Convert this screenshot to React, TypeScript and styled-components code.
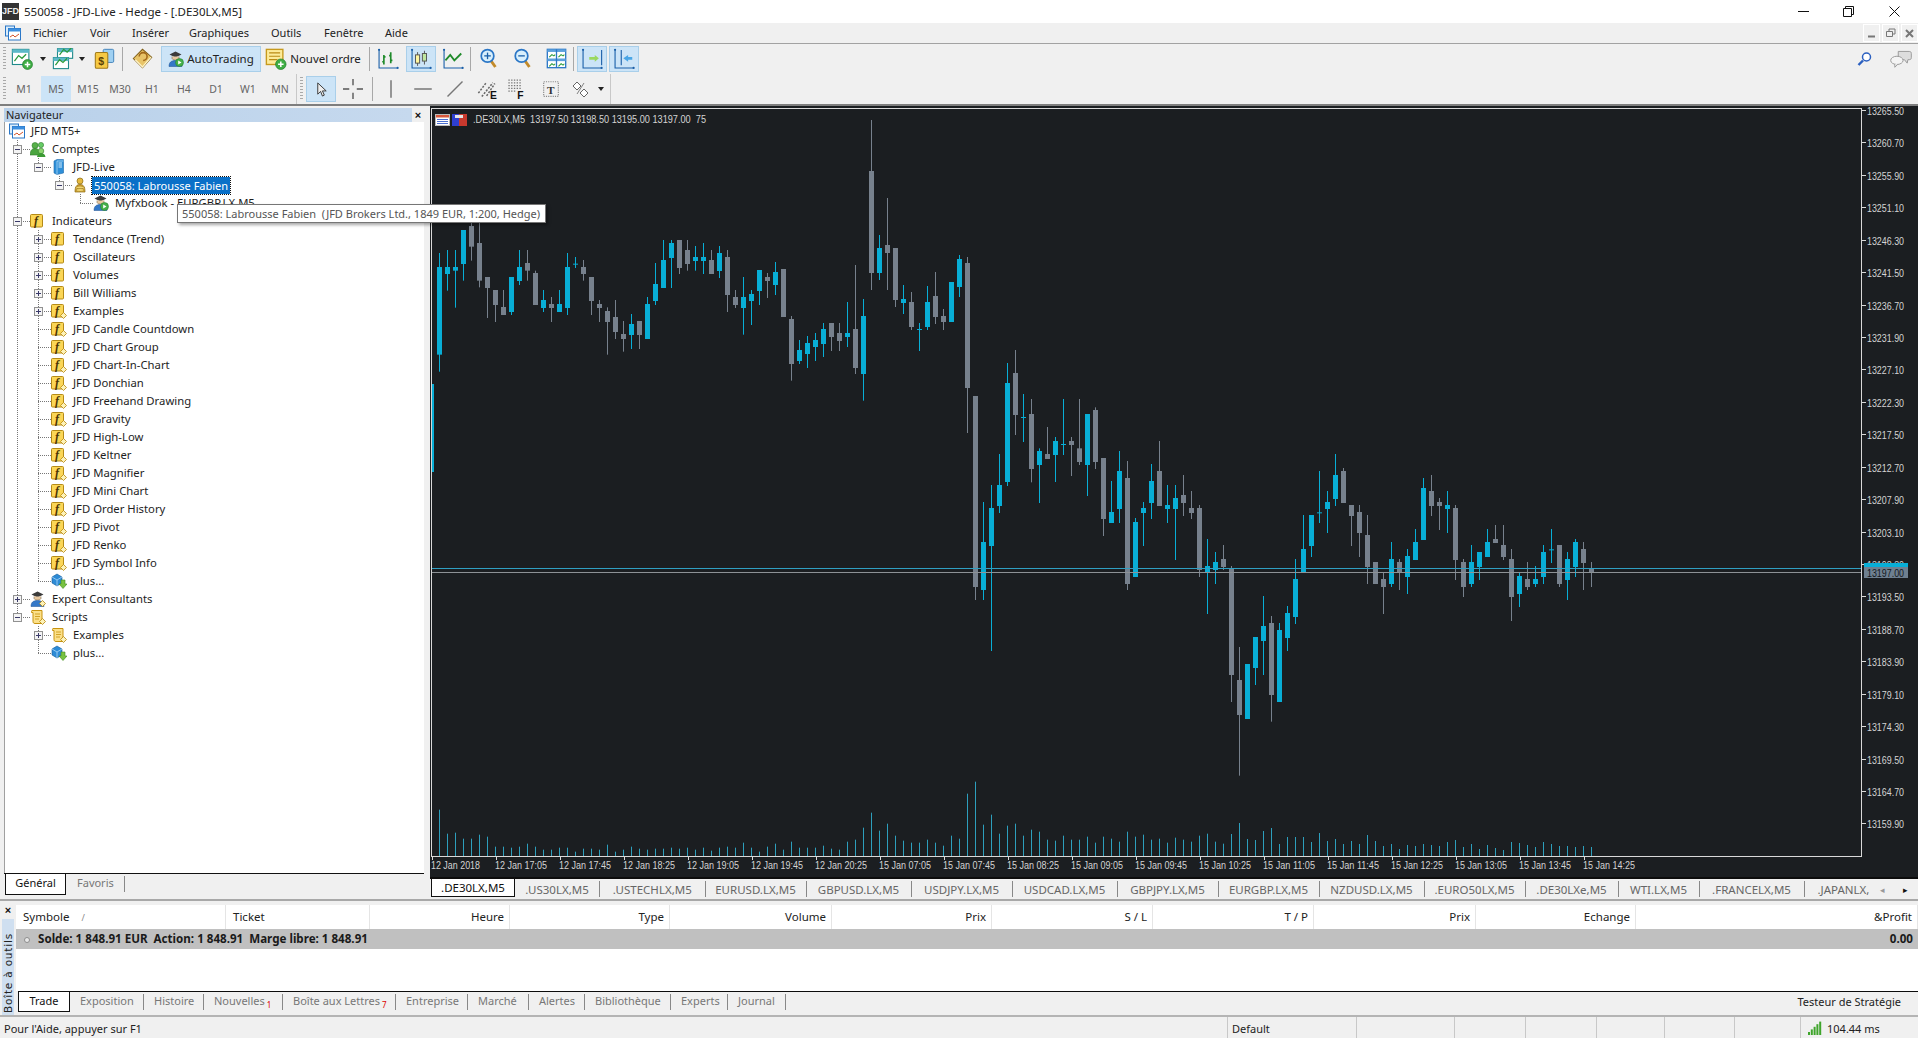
import React from "react";
import styled, { createGlobalStyle } from "styled-components";

const FONT = `"Noto Sans", "Open Sans", "Liberation Sans", sans-serif`;

const Global = createGlobalStyle`
  html, body { margin: 0; padding: 0; background: #f0f0f0; overflow: hidden; }
  * { box-sizing: border-box; }
`;

const Page = styled.div`
  width: 1918px; height: 1038px; overflow: hidden; position: relative;
  display: flex; flex-direction: column;
  font: 11px/1 ${FONT}; color: #1e1e1e; background: #f0f0f0;
`;

/* ---------- title and menu ---------- */
const TitleBar = styled.div`
  height: 23px; background: #fff; display: flex; align-items: center; padding-left: 2px; font-size: 11.5px;
`;
const Logo = styled.div`
  width: 17px; height: 17px; background: #333; color: #eee; font: bold 9px/17px "Liberation Sans", sans-serif; text-align: center; margin-right: 5px;
`;
const TitleText = styled.span`flex: 1; color: #222;`;
const WinBtn = styled.div`
  width: 45px; height: 23px; display: flex; align-items: center; justify-content: center;
  &:last-child { width: 47px; }
`;
const MenuBar = styled.div`
  height: 21px; background: #f0f0f0; border-bottom: 1px solid #a2a2a2; display: flex; align-items: center; padding-left: 5px;
`;
const MenuItem = styled.span<{ $w: number }>`
  width: ${p => p.$w}px; flex: none; font-size: 11px; color: #222;
`;
const MdiGroup = styled.div`margin-left: auto; display: flex; gap: 2px; align-self: flex-start; padding-top: 1px;`;
const MdiBtn = styled.div`
  width: 17px; height: 18px; border: 1px solid #fff; display: flex; align-items: center; justify-content: center;
`;

/* ---------- toolbars ---------- */
const Toolbar = styled.div<{ $h: number }>`
  height: ${p => p.$h}px; display: flex; align-items: center; background: #f0f0f0;
`;
const Grip = styled.div`
  width: 3px; height: 24px; margin: 0 3px 0 3px; flex: none;
  background: repeating-linear-gradient(to bottom, #a9a9a9 0 1px, transparent 1px 3px);
`;
const Slot = styled.div<{ $w: number; $on?: boolean; $l?: number }>`
  width: ${p => p.$w}px; height: 26px; flex: none; display: flex; align-items: center; justify-content: center;
  margin-left: ${p => p.$l ?? 0}px;
  background: ${p => (p.$on ? "#cce4f7" : "transparent")};
  border: 1px solid ${p => (p.$on ? "#a9cfea" : "transparent")};
  font-size: 11.5px; color: #222; gap: 3px; white-space: nowrap;
`;
const Sep = styled.div<{ $l?: number; $r?: number }>`
  width: 1px; height: 24px; background: #a8a8a8; flex: none;
  margin: 0 ${p => p.$r ?? 0}px 0 ${p => p.$l ?? 0}px;
`;
const Caret = styled.div<{ $w: number }>`
  width: ${p => p.$w}px; flex: none; display: flex; justify-content: center;
  &::before { content: ""; border: 3px solid transparent; border-top: 4px solid #222; margin-top: 3px; }
`;
const TfGroup = styled.div`
  display: flex; gap: 2px; padding-right: 1px; height: 30px; align-items: center;
`;
const Tf = styled.div<{ $on?: boolean }>`
  width: 30px; height: 26px; display: flex; align-items: center; justify-content: center;
  font-size: 10.5px; color: #666;
  background: ${p => (p.$on ? "#cce4f7" : "transparent")};
`;
const BandEnd = styled.div`
  width: 1px; height: 30px; background: #c8c8c8; flex: none;
`;
const RightIcons = styled.div`
  margin-left: auto; display: flex; align-items: center; gap: 17px; padding-right: 6px;
`;
const Rule = styled.div`height: 2px; background: #7e7e7e; flex: none;`;

/* ---------- middle ---------- */
const Main = styled.div`height: 793px; display: flex; flex: none;`;
const Navigator = styled.div`
  width: 430px; flex: none; display: flex; flex-direction: column; padding: 2px 6px 0 4px; background: #f0f0f0;
`;
const NavHead = styled.div`height: 14px; display: flex; align-items: center; flex: none;`;
const NavTitle = styled.div`
  width: 408px; height: 14px; padding: 0 0 0 2px; font-size: 11px; line-height: 13px; color: #222;
  background: linear-gradient(to right, #b9d1ea, #c6d9ee);
`;
const NavClose = styled.div`flex: 1; text-align: center; font: bold 11px/14px "Liberation Sans", sans-serif; color: #111;`;
const Tree = styled.div`flex: 1; background: #fff; padding: 0 0 0 4px; border-left: 1px solid #a0a0a0;`;
const Row = styled.div`height: 18px; display: flex; align-items: center; white-space: nowrap; font-size: 11.3px;`;
const dots = "repeating-linear-gradient(to bottom,#777 0 1px,transparent 1px 2px)";
const dotsH = "repeating-linear-gradient(to right,#777 0 1px,transparent 1px 2px)";
const Cell = styled.div<{ $line?: "full" | "half" | "none"; $elbow?: boolean }>`
  width: 21px; height: 18px; flex: none; display: flex; align-items: center; padding-left: 4px;
  background-repeat: no-repeat;
  background-image: ${p => [
    p.$line && p.$line !== "none" ? dots : "none",
    p.$elbow ? dotsH : "none",
  ].join(",")};
  background-position: 8px 0, 8px 9px;
  background-size: 1px ${p => (p.$line === "half" ? "9px" : "18px")}, 13px 1px;
`;
const Expander = styled.div<{ $plus?: boolean }>`
  width: 9px; height: 9px; border: 1px solid #919191; background-color: #f4f4f4; background-repeat: no-repeat; background-position: center;
  background-image: linear-gradient(#3a3a6a, #3a3a6a)${p => (p.$plus ? ", linear-gradient(#3a3a6a, #3a3a6a)" : "")};
  background-size: 5px 1px${p => (p.$plus ? ", 1px 5px" : "")};
`;
const RowIcon = styled.div`width: 16px; height: 16px; flex: none; margin-right: 6px;`;
const RowLabel = styled.span<{ $sel?: boolean }>`
  padding: 3px 2px; margin-left: -2px;
  font-size: ${p => (p.$sel ? "11px" : "inherit")};
  background: ${p => (p.$sel ? "#0a70c8" : "transparent")};
  color: ${p => (p.$sel ? "#fff" : "#1e1e1e")};
  outline: ${p => (p.$sel ? "1px dotted #111" : "none")};
`;
const Tip = styled.div`
  position: absolute; left: 177px; top: 204px; width: 369px; height: 19px; background: #fff;
  border: 1px solid #767676; box-shadow: 2px 2px 3px rgba(0,0,0,.35); padding: 3px 0 0 4px;
  font-size: 11px; color: #555; white-space: pre; z-index: 5;
`;
const NavTabs = styled.div`
  height: 25px; flex: none; border-top: 1px solid #111; display: flex; align-items: flex-start; padding-left: 1px; margin-bottom: 1px;
`;
const NavTabOn = styled.div`
  width: 61px; height: 21px; background: #fff; border: 1px solid #111; border-top: 0; text-align: center; line-height: 18px; color: #111;
`;
const NavTabOff = styled.div`
  width: 59px; height: 16px; margin-top: 2px; padding-left: 11px; line-height: 14px; color: #777; border-right: 1px solid #888;
`;
const ChartCol = styled.div`flex: 1; display: flex; flex-direction: column; min-width: 0;`;
const ChartSvg = styled.svg`display: block; flex: none; width: 1488px; height: 771px; background: #1b1e21;`;
const ChartTabs = styled.div`
  height: 22px; flex: none; display: flex; align-items: center; background: #f0f0f0; border-top: 2px solid #0c0c0c; padding-left: 1px; font-size: 11.5px;
`;
const ChartTab = styled.div<{ $w: number; $on?: boolean }>`
  width: ${p => p.$w}px; flex: none; overflow: hidden; white-space: nowrap; text-align: center;
  height: ${p => (p.$on ? 18 : 16)}px; line-height: ${p => (p.$on ? 18 : 17)}px;
  align-self: ${p => (p.$on ? "flex-start" : "center")};
  color: ${p => (p.$on ? "#111" : "#666")};
  background: ${p => (p.$on ? "#fff" : "transparent")};
  border: ${p => (p.$on ? "1px solid #111" : "0")};
  border-top: 0;
  border-right: 1px solid ${p => (p.$on ? "#111" : "#888")};
`;
const ClipTab = styled(ChartTab)`border-right: 0; text-align: left; padding-left: 13px;`;
const TabArrows = styled.div`
  margin-left: auto; width: 43px; display: flex; justify-content: space-between; padding: 0 10px 0 5px; font-size: 9px; color: #111;
`;
const ArrowDim = styled.span`color: #999;`;

/* ---------- bottom ---------- */
const Bottom = styled.div`
  height: 116px; flex: none; display: flex; border-top: 2px solid #a8a8a8; padding-top: 4px; background: #f0f0f0;
`;
const Strip = styled.div`width: 16px; flex: none; display: flex; flex-direction: column; align-items: center;`;
const StripX = styled.div`height: 14px; font: bold 11px/10px "Liberation Sans", sans-serif; color: #111;`;
const StripText = styled.div`
  flex: 1; width: 12px; background: #cfdff0; writing-mode: vertical-rl; transform: rotate(180deg);
  font: 10.5px/12px "DejaVu Sans", sans-serif; color: #222; letter-spacing: .8px; text-align: left; padding-top: 2px;
`;
const Terminal = styled.div`flex: 1; display: flex; flex-direction: column; min-width: 0;`;
const COLS = "210px 144px 140px 160px 162px 160px 161px 161px 162px 160px 282px";
const Head = styled.div`height: 24px; flex: none; background: #fff; display: grid; grid-template-columns: ${COLS}; font-size: 11.5px;`;
const HeadCell = styled.div<{ $right?: boolean }>`
  border-right: 1px solid #e5e5e5; display: flex; align-items: center; padding: 0 5px 0 7px;
  justify-content: ${p => (p.$right ? "flex-end" : "flex-start")}; color: #222; gap: 12px;
`;
const SortMark = styled.span`color: #888; font-size: 9px;`;
const Balance = styled.div`
  height: 20px; flex: none; background: #c0c0c0; display: flex; align-items: center; padding: 0 5px 0 8px; font-weight: 700; font-size: 11.6px; color: #1a1a1a; white-space: pre;
`;
const Dot = styled.span`width: 6px; height: 6px; border-radius: 50%; background: #e8e8e8; border: 1px solid #8d8d8d; margin-right: 8px; margin-top: 1px;`;
const BalanceEnd = styled.span`margin-left: auto;`;
const Blank = styled.div`height: 42px; flex: none; background: #fff;`;
const TermTabs = styled.div`
  height: 24px; flex: none; border-top: 1px solid #0c0c0c; display: flex; align-items: flex-start; margin-left: 2px; background: #f0f0f0;
`;
const TermOn = styled.div`
  width: 52px; height: 20px; background: #fff; border: 1px solid #111; border-top: 0; text-align: center; line-height: 17px; color: #111; flex: none;
`;
const TermOff = styled.div<{ $w: number }>`
  width: ${p => p.$w}px; height: 16px; margin-top: 2px; padding-left: 10px; line-height: 13px; flex: none; color: #777; border-right: 1px solid #888; white-space: nowrap;
`;
const Badge = styled.sub`color: #d00; font-size: 8px; margin-left: 2px; vertical-align: -3px; line-height: 0;`;
const Tester = styled.div`margin-left: auto; padding: 4px 17px 0 0; color: #222;`;
const StatusRule = styled.div`height: 2px; background: #b4b4b4; flex: none;`;
const Status = styled.div`height: 21px; flex: none; display: flex; align-items: center; background: #f0f0f0;`;
const StatusCell = styled.div<{ $w: number; $last?: boolean }>`
  width: ${p => p.$w}px; height: 21px; flex: none; padding: 2px 0 0 ${p => (p.$last ? 6 : 4)}px; display: flex; align-items: center; gap: 4px;
  border-right: ${p => (p.$last ? "0" : "1px solid #c8c8c8")}; color: #222; font-size: 11px; white-space: nowrap;
`;

/* ---------- icons ---------- */
const Ico: React.FC<{ s?: number; children: React.ReactNode }> = ({ s = 16, children }) => (
  <svg width={s} height={s} viewBox="0 0 16 16" style={{ display: "block", flex: "none" }}>{children}</svg>
);
const Plus = ({ cx = 12, cy = 12, r = 3.6 }) => (
  <g>
    <circle cx={cx} cy={cy} r={r} fill="#3fae45" stroke="#1d7a27" strokeWidth=".5" />
    <path d={`M${cx - 2} ${cy}h4M${cx} ${cy - 2}v4`} stroke="#fff" strokeWidth="1.1" />
  </g>
);
const Diamond = () => <path d="M12.5 9.5l3 3-3 3-3-3z" fill="#fdf2b8" stroke="#b8860b" strokeWidth=".8" />;
const WorkIcon = () => (
  <Ico>
    <rect x=".5" y="1" width="9" height="10" fill="#d9ecfb" stroke="#2a76c6" />
    <rect x="3.5" y="3.5" width="12" height="11.5" fill="#fff" stroke="#2a76c6" />
    <rect x="3.5" y="3.5" width="12" height="3" fill="#3c8fe0" />
    <path d="M5 12l3-2 2 2 4-3" stroke="#d2522a" fill="none" />
  </Ico>
);
const PeopleIcon = () => (
  <Ico>
    <circle cx="5" cy="4.5" r="3" fill="#57b04a" stroke="#2f7a2a" strokeWidth=".6" />
    <circle cx="11" cy="4" r="2.6" fill="#6c6" stroke="#2f7a2a" strokeWidth=".6" />
    <path d="M0 14c.5-5 2-6.5 5-6.5s4.500 1.500 5 6.500z" fill="#4aa53f" stroke="#2f7a2a" strokeWidth=".6" />
    <circle cx="11" cy="10" r="2.800" fill="#8cd46e" stroke="#2f7a2a" strokeWidth=".6" />
    <path d="M7 16c.5-3 2-4 4-4s4 1 4.500 4z" fill="#3c9a34" />
  </Ico>
);
const ServerIcon = () => (
  <Ico>
    <path d="M3 2l3-1.500h6.500V14L6 15.500 3 14z" fill="#2e8fd8" stroke="#1e6aaa" strokeWidth=".6" />
    <path d="M6 2h6.500M6 2v13.500" stroke="#bfe3fb" strokeWidth=".7" />
    <path d="M7.500 4h3.500M7.500 6h3.500M7.500 8h3.500" stroke="#e9f6ff" strokeWidth=".9" />
  </Ico>
);
const CoinIcon = () => (
  <Ico>
    <circle cx="8" cy="4" r="3" fill="#e6b93d" stroke="#8a6a16" strokeWidth=".7" />
    <path d="M3 15c0-6 2-7.500 5-7.500s5 1.500 5 7.500z" fill="#d9a62e" stroke="#8a6a16" strokeWidth=".7" />
    <ellipse cx="8" cy="10.500" rx="4" ry="1.500" fill="#f3d56e" stroke="#8a6a16" strokeWidth=".5" />
    <ellipse cx="8" cy="13" rx="4" ry="1.500" fill="#f3d56e" stroke="#8a6a16" strokeWidth=".5" />
  </Ico>
);
const Robot = ({ play = false, dia = false }) => (
  <Ico>
    <path d="M1.500 3.500L7.500.5l6 3-6 3z" fill="#3b3b3b" />
    <path d="M4 5.500v2c1 2 6 2 7 0v-2" fill="#e8c8a0" stroke="#6a5a40" strokeWidth=".5" />
    <path d="M1 15.500c0-4 2-6 6.500-6s6 2 6.500 6z" fill="#3478c8" stroke="#1b4f8f" strokeWidth=".5" />
    {play && <g><circle cx="11.500" cy="11.500" r="4" fill="#45b04a" stroke="#1f7a2a" strokeWidth=".5" /><path d="M10.200 9.500l3.300 2-3.300 2z" fill="#fff" /></g>}
    {dia && <Diamond />}
  </Ico>
);
const FxIcon = ({ dia = false }) => (
  <Ico>
    <rect x=".5" y="1.500" width="12" height="12.500" rx="1" fill="#fbd657" stroke="#b58a16" />
    <text x="4" y="12" fontFamily='"Liberation Serif", serif' fontStyle="italic" fontWeight="700" fontSize="12" fill="#4a3405">f</text>
    {dia && <Diamond />}
  </Ico>
);
const CubeIcon = () => (
  <Ico>
    <path d="M1 4l5-3 5 3v6l-5 3-5-3z" fill="#2d8bd6" stroke="#165d9a" strokeWidth=".6" />
    <path d="M1 4l5 3 5-3M6 7v6" stroke="#bfe3fb" strokeWidth=".7" fill="none" />
    <path d="M10 7h4v4h2l-4 4.500L8 11h2z" fill="#78c241" stroke="#3f8a1f" strokeWidth=".6" />
  </Ico>
);
const ScrollIcon = () => (
  <Ico>
    <path d="M2 1.500h10v11c0 1.500 1 2 1 2H5c-1.500 0-2-1-2-2V3.500H1.500c0-1 0-2 .5-2z" fill="#fbe08a" stroke="#c8930e" />
    <path d="M5 5h5M5 7.500h5M5 10h4" stroke="#c8930e" strokeWidth=".8" />
    <Diamond />
  </Ico>
);
const WinFrame = ({ x = 1, y = 1, w = 12, h = 11 }) => (
  <g>
    <rect x={x} y={y} width={w} height={h} fill="#fff" stroke="#1f8a8a" strokeWidth=".8" />
    <rect x={x} y={y} width={w} height="2.500" fill="#5cb8c8" />
    <path d={`M${x + 1.500} ${y + h - 2.500}l3-4 2.500 2 3-3`} stroke="#2a9a3a" fill="none" strokeWidth=".9" />
  </g>
);
const NewChart = () => <Ico s={22}><WinFrame /><Plus /></Ico>;
const Profiles = () => <Ico s={22}><WinFrame x={4} y={.5} w={11} h={7} /><WinFrame x={1} y={7} w={11} h={8} /></Ico>;
const Market = () => (
  <Ico s={21}>
    <rect x="7" y="1" width="8" height="10" rx="1" fill="#9fd0f2" stroke="#3e7fb8" strokeWidth=".7" />
    <rect x="1" y="3.500" width="9.500" height="12" rx="1" fill="#f6c944" stroke="#a07a18" strokeWidth=".8" />
    <text x="3.300" y="12.800" fontFamily='"Liberation Sans", sans-serif' fontWeight="700" fontSize="8" fill="#5b4206">$</text>
  </Ico>
);
const Book = () => (
  <Ico s={21}>
    <path d="M1 8l7-7 7 6-7 8z" fill="#e8c468" stroke="#80601a" strokeWidth=".8" />
    <path d="M2.500 9l5.500 5.500L14.500 7" fill="none" stroke="#fff5c8" strokeWidth="1" />
    <path d="M5.500 6.500a3 3 0 1 1 3 3" fill="none" stroke="#a2681a" strokeWidth="1.200" />
  </Ico>
);
const OrderIco = () => (
  <Ico s={22}>
    <rect x="1" y="1" width="12" height="11" fill="#fdeb9a" stroke="#c79a1e" />
    <path d="M3 3.500h8M3 6h8M3 8.500h6" stroke="#b98a14" strokeWidth=".9" />
    <Plus cx={11.500} cy={11.800} r={3.800} />
  </Ico>
);
const Axes = ({ children }: { children?: React.ReactNode }) => (
  <Ico s={22}>
    <path d="M1.500 1v13.500H15" stroke="#1a5fa8" fill="none" strokeWidth=".8" />
    <circle cx="1.500" cy="1.300" r=".8" fill="#1a5fa8" /><circle cx="15" cy="14.500" r=".8" fill="#1a5fa8" />
    {children}
  </Ico>
);
const BarsIco = () => <Axes><path d="M5 5v7M3.800 10h1.200M5 6.500h1.200M10 3v8M8.800 5.500H10M10 9h1.200" stroke="#1f8a2a" strokeWidth="1.200" fill="none" /></Axes>;
const CandleIco = () => <Axes><path d="M5.500 3v10M10.500 2v10" stroke="#555" strokeWidth=".7" /><rect x="4" y="5" width="3" height="6" fill="#fff6a0" stroke="#555" strokeWidth=".7" /><rect x="9" y="4" width="3" height="5.500" fill="#bfe7a0" stroke="#555" strokeWidth=".7" /></Axes>;
const LineIco = () => <Axes><path d="M2.500 9l3.500-4 3 4 5-5" stroke="#1f8a2a" strokeWidth="1.300" fill="none" /></Axes>;
const Magnify = ({ plus = false }) => (
  <Ico s={21}>
    <path d="M9 9.500l3.500 5" stroke="#c28a2a" strokeWidth="2.200" />
    <circle cx="6.500" cy="6" r="4.800" fill="#d8effc" stroke="#2a76c6" strokeWidth="1.300" />
    <path d="M4 6h5" stroke="#1a5fa8" />
    {plus && <path d="M6.500 3.500v5" stroke="#1a5fa8" />}
  </Ico>
);
const Tile = () => (
  <Ico s={21}>
    <rect x="1" y="1" width="14" height="14" fill="#fff" stroke="#2a76c6" />
    <rect x="1" y="1" width="14" height="2" fill="#5aa0dc" />
    <rect x="1" y="8" width="14" height="2" fill="#5aa0dc" />
    <path d="M8 1v14" stroke="#2a76c6" />
    <path d="M2.500 7l2-2 1.500 1 1-1M9.500 7l2-2 1.500 1 1-1M2.500 14l2-2 1.500 1 1-1M9.500 14l2-2 1.500 1 1-1" stroke="#2a9a3a" fill="none" strokeWidth=".8" />
  </Ico>
);
const ShiftIco = () => <Axes><path d="M15 1.500v11" stroke="#1a5fa8" strokeWidth=".8" /><path d="M6 6.500h4V5l3 2.500-3 2.500V8.500H6z" fill="#9ad860" /></Axes>;
const ScrollIco = () => <Axes><path d="M6 1.500v11" stroke="#1a5fa8" strokeWidth=".8" /><path d="M14 6.500h-3V5L7.500 7.500 11 10V8.500h3z" fill="#4aa6e6" /></Axes>;
const CursorIco = () => <Ico s={15}><path d="M4 1v12l3-3 2 5 2-1-2-4.500h4z" fill="#eee" stroke="#333" strokeWidth="1" /></Ico>;
const CrossIco = () => <Ico s={20}><path d="M8 0v5M8 11v5M0 8h5M11 8h5" stroke="#555" strokeWidth="1.100" /></Ico>;
const VertIco = () => <Ico s={20}><path d="M8 1v14" stroke="#777" strokeWidth="1.200" /></Ico>;
const HorizIco = () => <Ico s={20}><path d="M1 8h14" stroke="#777" strokeWidth="1.200" /></Ico>;
const TrendIco = () => <Ico s={20}><path d="M2 14L14 2" stroke="#777" strokeWidth="1.200" /></Ico>;
const ChannelIco = () => (
  <Ico s={22}>
    <path d="M1 11l6-8M3.500 13.500l8-10M7 13l6-9" stroke="#666" strokeWidth="1.100" strokeDasharray="1.500 1" fill="none" />
    <text x="9.500" y="15.500" fontFamily='"Liberation Sans", sans-serif' fontWeight="700" fontSize="7.500" fill="#111">E</text>
  </Ico>
);
const FiboIco = () => (
  <Ico s={22}>
    <path d="M1 1.500h10M1 3.500h10M1 5.500h10M1 7.500h10M1 9.500h6" stroke="#777" strokeDasharray="1 1" />
    <text x="7.500" y="15.500" fontFamily='"Liberation Sans", sans-serif' fontWeight="700" fontSize="7.500" fill="#111">F</text>
  </Ico>
);
const TextIco = () => (
  <Ico s={18}>
    <rect x="1.500" y="1.500" width="13" height="13" fill="none" stroke="#888" strokeDasharray="1 1" />
    <text x="4.500" y="12" fontFamily='"Liberation Serif", serif' fontWeight="700" fontSize="10" fill="#333">T</text>
  </Ico>
);
const ShapesIco = () => (
  <Ico s={16}>
    <path d="M4 1l4 4-4 4-4-4z" fill="#fff" stroke="#666" /><path d="M11 8l4 4-4 4-4-4z" fill="#fff" stroke="#666" />
    <path d="M11 2L4 13" stroke="#666" strokeWidth=".8" />
  </Ico>
);
const SearchBlue = () => <Ico s={16}><path d="M6 9.500L1.500 14" stroke="#2a5fc0" strokeWidth="2.400" /><circle cx="9.500" cy="6" r="4" fill="#fff" stroke="#2a5fc0" strokeWidth="1.500" /></Ico>;
const ChatIco = () => (
  <Ico s={22}>
    <path d="M6 2.500h8c1 0 1.500 .5 1.500 1.500v3c0 1-.5 1.500-1.500 1.500h-1L12.500 11 10.500 8.500H6z" fill="#ddd" stroke="#999" strokeWidth=".7" />
    <ellipse cx="5" cy="9" rx="4.500" ry="3" fill="#f4f4f4" stroke="#999" strokeWidth=".7" />
    <path d="M3.500 11.500v2.500l2-2" fill="#f4f4f4" stroke="#999" strokeWidth=".7" />
  </Ico>
);
const Signal = () => (
  <Ico s={16}>
    {[0, 1, 2, 3, 4].map(i => <rect key={i} x={1 + i * 2.800} y={13 - i * 2.600 - 2} width="2" height={i * 2.600 + 3} fill="#3fa52c" />)}
  </Ico>
);

/* ---------- tree data ---------- */
type L = "full" | "half" | "none";
type TreeRow = { t: string; cells: L[]; elbow?: boolean; exp?: "+" | "-"; icon: React.ReactNode; sel?: boolean };
const ind = (t: string, icon: React.ReactNode, exp?: "+" | "-"): TreeRow => ({ t, cells: ["full", "full"], icon, exp, elbow: true });
const jfd = ["JFD Candle Countdown", "JFD Chart Group", "JFD Chart-In-Chart", "JFD Donchian", "JFD Freehand Drawing", "JFD Gravity", "JFD High-Low", "JFD Keltner", "JFD Magnifier", "JFD Mini Chart", "JFD Order History", "JFD Pivot", "JFD Renko", "JFD Symbol Info"];
const rows: TreeRow[] = [
  { t: "JFD MT5+", cells: [], icon: <WorkIcon /> },
  { t: "Comptes", cells: ["full"], elbow: true, exp: "-", icon: <PeopleIcon /> },
  { t: "JFD-Live", cells: ["full", "half"], elbow: true, exp: "-", icon: <ServerIcon /> },
  { t: "550058: Labrousse Fabien", cells: ["full", "none", "half"], elbow: true, exp: "-", icon: <CoinIcon />, sel: true },
  { t: "Myfxbook - EURGBP.LX,M5", cells: ["full", "none", "none", "half"], elbow: true, icon: <Robot play /> },
  { t: "Indicateurs", cells: ["full"], elbow: true, exp: "-", icon: <FxIcon /> },
  ind("Tendance (Trend)", <FxIcon />, "+"),
  ind("Oscillateurs", <FxIcon />, "+"),
  ind("Volumes", <FxIcon />, "+"),
  ind("Bill Williams", <FxIcon />, "+"),
  ind("Examples", <FxIcon dia />, "+"),
  ...jfd.map(n => ind(n, <FxIcon dia />)),
  { t: "plus...", cells: ["full", "half"], elbow: true, icon: <CubeIcon /> },
  { t: "Expert Consultants", cells: ["full"], elbow: true, exp: "+", icon: <Robot dia /> },
  { t: "Scripts", cells: ["half"], elbow: true, exp: "-", icon: <ScrollIcon /> },
  { t: "Examples", cells: ["none", "full"], elbow: true, exp: "+", icon: <ScrollIcon /> },
  { t: "plus...", cells: ["none", "half"], elbow: true, icon: <CubeIcon /> },
];

/* ---------- chart data: [zoom x, cyan?, wick top, body top, body bottom, wick bottom] in zoom units ---------- */
type C = [number, number, number, number, number, number];
const partA: C[] = [
  [24,1,447,489,752,803],[45,1,438,489,510,560],[66,1,438,489,500,611],[87,1,378,378,480,530],[108,0,355,366,428,470],[129,0,355,417,530,550],[150,0,519,519,552,642],[171,0,558,558,603,654],[192,0,558,609,633,633],[213,1,519,519,624,633],[234,1,438,489,531,543],[255,0,438,477,500,530],[276,0,500,507,603,603],[296,1,558,588,612,624],[317,0,579,600,612,654],[338,1,558,600,624,624],[359,1,447,489,612,633],[380,1,459,479,481,492],[401,0,468,489,510,530],[422,0,519,519,591,633],[443,0,588,600,612,654],[464,0,610,621,654,752],[485,0,588,639,684,705],[505,0,651,690,705,743],[526,1,630,660,693,735],[547,0,651,651,693,735],[568,1,579,600,705,705],[589,1,477,540,591,603],[610,1,408,468,552,552],[631,1,408,417,462,552],[652,0,408,408,492,510],[673,0,408,438,480,500],[693,1,426,459,471,500],[714,1,417,459,471,510],[735,0,438,468,510,510],[756,1,426,447,501,522],[777,0,438,459,573,624],[798,0,558,579,603,612],[819,1,519,579,612,692],[840,1,558,570,591,663],[861,1,498,498,561,603],[882,0,507,519,531,582],[903,1,474,504,543,573],[924,0,495,495,639,639],[945,0,636,645,780,830],[965,1,708,738,771,780],[986,1,696,717,750,792],[1007,1,687,708,729,771],[1028,1,657,675,720,759],[1049,0,657,657,699,741],[1070,0,657,687,711,741],[1091,1,594,687,699,729],[1112,0,483,675,792,810],[1133,1,585,636,810,890],[1154,0,48,201,507,558],[1174,1,393,432,507,528],[1195,0,282,423,447,558],[1216,0,432,432,588,609],[1237,1,543,585,597,630],[1258,0,564,594,669,678],[1279,1,657,675,677,741],[1300,1,546,594,669,678],[1321,0,504,576,639,660],[1342,0,615,636,654,678],[1362,1,534,534,654,654],[1383,1,453,465,549,579],[1404,0,459,477,852,987],[1425,0,876,876,1449,1488],[1446,1,1194,1314,1458,1488],[1467,1,1143,1212,1326,1641],[1488,1,1050,1143,1206,1227],[1509,1,777,837,1134,1146],[1530,0,738,807,933,993],[1551,1,870,939,941,1014],
];
const partB: C[] = [
  [3,0,0,45,210,250],[24,1,148,156,198,312],[45,0,84,165,180,180],[66,1,114,126,168,249],[87,1,0,135,137,168],[108,0,114,126,138,231],[129,0,0,148,189,198],[150,1,45,45,198,291],[171,0,25,33,189,210],[192,0,177,177,360,411],[213,1,246,339,372,372],[234,1,156,216,330,372],[255,0,186,237,555,573],[276,1,357,369,534,534],[296,1,309,327,342,441],[317,1,195,246,312,360],[338,0,126,216,321,321],[359,1,258,318,330,372],[380,1,258,297,330,483],[401,0,228,288,312,351],[422,0,276,327,342,360],[443,0,318,327,513,534],[464,1,420,501,521,645],[485,1,459,489,513,555],[505,0,438,480,504,513],[526,0,501,507,828,909],[547,0,744,843,948,1130],[568,1,795,795,960,960],[589,1,714,714,807,858],[610,1,591,681,726,828],[631,0,651,672,888,968],[652,1,672,693,909,909],[673,1,621,642,717,756],[693,1,480,540,654,675],[714,1,348,450,522,522],[735,1,348,348,441,474],[756,1,216,340,342,372],[777,1,276,309,330,402],[798,1,165,228,300,321],[819,0,207,216,312,312],[840,0,318,318,351,441],[861,0,318,339,402,474],[882,0,348,408,504,555],[903,0,489,489,555,555],[924,0,522,540,564,645],[945,1,429,480,555,564],[965,0,480,489,522,573],[986,1,450,471,534,585],[1007,1,390,429,483,483],[1028,1,237,267,423,423],[1049,0,228,276,321,351],[1070,0,297,309,321,393],[1091,1,276,318,330,402],[1112,0,318,327,483,543],[1133,0,480,489,564,594],[1153,1,438,489,555,564],[1174,1,459,459,504,543],[1195,1,390,429,474,474],[1216,0,378,420,432,432],[1237,0,378,438,474,483],[1258,0,450,480,594,666],[1279,1,522,531,585,624],[1300,0,489,540,564,573],[1321,1,501,540,555,564],[1342,1,438,459,534,555],[1362,1,390,451,453,492],[1383,0,438,438,555,564],[1404,1,459,480,543,603],[1425,1,420,429,504,534],[1446,0,429,450,492,573],[1467,0,489,510,520,564],
];
const snap = (x: number) => 439 + 8 * Math.round((x - 439) / 8);
const candles = [
  ...partA.map(c => ({ x: snap(430 + c[0] / 2.613), cy: c[1], v: c.slice(2).map(z => 105 + z / 3) })),
  ...partB.map(c => ({ x: snap(1030 + c[0] / 2.613), cy: c[1], v: c.slice(2).map(z => 400 + z / 3) })),
];
const volA = [123,195,192,210,210,198,204,234,234,237,234,225,234,243,243,237,237,249,240,240,243,228,249,243,234,240,243,240,240,237,240,237,243,237,246,237,234,237,222,237,249,234,225,243,219,237,237,237,231,240,243,219,213,177,132,186,165,201,216,222,222,213,222,231,201,210,75,39,168,138,195,171,165,201,183,189,213,216,201,213,213,204,222,204,210,219,189,204,198,213,210,222,207,213,219,201,195,219,225];
const volB = [435,402,450,453,426,417,465,444,444,444,459,432,456,450,465,456,465,438,456,471,465,480,468,471,465,468,471,459,453,474,465,480,468,477,483,459,462,468,474,459,465,471,471,474,471,474];
const volumes = [...volA.map(z => (262 - z) / 3), ...volB.map(z => (501 - z) / 3)];
const times = ["12 Jan 2018","12 Jan 17:05","12 Jan 17:45","12 Jan 18:25","12 Jan 19:05","12 Jan 19:45","12 Jan 20:25","15 Jan 07:05","15 Jan 07:45","15 Jan 08:25","15 Jan 09:05","15 Jan 09:45","15 Jan 10:25","15 Jan 11:05","15 Jan 11:45","15 Jan 12:25","15 Jan 13:05","15 Jan 13:45","15 Jan 14:25"];
const CY = "#08aed6", GR = "#77818d", AX = "#d9d9d9", LAB = "#d4d4d4";
const svgFont = '"Liberation Sans", sans-serif';

const Chart = () => (
  <ChartSvg viewBox="430 107 1488 771">
    <rect x="431" y="109" width="1431" height="1" fill={AX} />
    <rect x="431" y="109" width="1" height="749" fill={AX} />
    <rect x="1861" y="109" width="1" height="749" fill={AX} />
    <rect x="431" y="857" width="1431" height="1" fill={AX} />
    <rect x="432" y="385" width="2" height="88" fill={CY} />
    {candles.map((c, i) => (
      <g key={i} fill={c.cy ? CY : GR}>
        <rect x={c.x} y={c.v[0]} width="1" height={c.v[3] - c.v[0]} />
        <rect x={c.x - 2} y={c.v[1]} width="5" height={Math.max(1, c.v[2] - c.v[1])} />
      </g>
    ))}
    {volumes.map((h, i) => <rect key={i} x={439 + 8 * i} y={857 - h} width="1" height={h} fill="#2d9fbd" />)}
    <rect x="432" y="569" width="1429" height="1" fill="#2f9fc2" />
    <rect x="432" y="573" width="1429" height="1" fill="#8d9296" />
    {times.map((t, i) => (
      <g key={t}>
        <rect x={432 + 64 * i} y="857" width="1" height="4" fill={AX} />
        <text x={431 + 64 * i} y="870" fontFamily={svgFont} fontSize="10" fill={LAB} textLength={i === 0 ? 49 : 52} lengthAdjust="spacingAndGlyphs">{t}</text>
      </g>
    ))}
    {Array.from({ length: 23 }, (_, k) => {
      const yy = Math.round(111 + 32.43 * k);
      return (
        <g key={k}>
          <rect x="1861" y={yy} width="5" height="1" fill={AX} />
          <text x="1867" y={yy + 5} fontFamily={svgFont} fontSize="10" fill={LAB} textLength="37" lengthAdjust="spacingAndGlyphs">{(13265.5 - 4.8 * k).toFixed(2)}</text>
        </g>
      );
    })}
    <rect x="1864" y="564" width="44" height="4" fill="#08aed6" />
    <rect x="1864" y="568" width="44" height="11" fill="#6f8090" />
    <text x="1867" y="577.500" fontFamily={svgFont} fontSize="10" fill="#14181c" textLength="37" lengthAdjust="spacingAndGlyphs">13197.00</text>
    <g transform="translate(435 115)">
      <rect x=".5" y=".5" width="14" height="11" fill="#fff" stroke="#bbb" />
      <rect x="1" y="1" width="13" height="2.500" fill="#d8583c" />
      <path d="M2 5.500h11M2 7.500h11M2 9.500h11" stroke="#4a6fd0" />
      <rect x="17" y="0" width="7" height="12" fill="#2f3fd0" />
      <rect x="24" y="0" width="8" height="12" fill="#c8392e" />
      <rect x="20" y="1" width="8" height="3" fill="#e6e6e6" />
    </g>
    <text x="473" y="124" fontFamily={svgFont} fontSize="10" fill={LAB} textLength="233" lengthAdjust="spacingAndGlyphs" xmlSpace="preserve">.DE30LX,M5  13197.50 13198.50 13195.00 13197.00  75</text>
  </ChartSvg>
);

const chartTabs: [string, number][] = [[".US30LX,M5",85],[".USTECHLX,M5",105.5],["EURUSD.LX,M5",101],["GBPUSD.LX,M5",105],["USDJPY.LX,M5",101],["USDCAD.LX,M5",105],["GBPJPY.LX,M5",101],["EURGBP.LX,M5",101],["NZDUSD.LX,M5",105],[".EURO50LX,M5",101],[".DE30LXe,M5",93],["WTI.LX,M5",81],[".FRANCELX,M5",105]];
const termTabs: [string, number, string?][] = [["Exposition",74],["Histoire",60],["Nouvelles",79,"1"],["Boîte aux Lettres",113,"7"],["Entreprise",72],["Marché",61],["Alertes",56],["Bibliothèque",86],["Experts",57],["Journal",58]];
const heads: [string, boolean][] = [["Ticket",false],["Heure",true],["Type",true],["Volume",true],["Prix",true],["S / L",true],["T / P",true],["Prix",true],["Echange",true],["&Profit",true]];
const statusCells = [98, 71, 71, 68, 70, 66];

export default function App() {
  return (
    <Page>
      <Global />
      <TitleBar>
        <Logo>JFD</Logo>
        <TitleText>550058 - JFD-Live - Hedge - [.DE30LX,M5]</TitleText>
        <WinBtn><svg width="11" height="11"><path d="M0 5.500h11" stroke="#111" /></svg></WinBtn>
        <WinBtn><svg width="11" height="11"><path d="M.5 2.500h8v8h-8zM2.500 2.500v-2h8v8h-2" fill="none" stroke="#111" /></svg></WinBtn>
        <WinBtn><svg width="11" height="11"><path d="M.5.5l10 10M10.500.5l-10 10" stroke="#111" /></svg></WinBtn>
      </TitleBar>
      <MenuBar>
        <MenuItem $w={28}><WorkIcon /></MenuItem>
        <MenuItem $w={57}>Fichier</MenuItem>
        <MenuItem $w={42}>Voir</MenuItem>
        <MenuItem $w={57}>Insérer</MenuItem>
        <MenuItem $w={82}>Graphiques</MenuItem>
        <MenuItem $w={53}>Outils</MenuItem>
        <MenuItem $w={61}>Fenêtre</MenuItem>
        <MenuItem $w={40}>Aide</MenuItem>
        <MdiGroup>
          <MdiBtn><svg width="9" height="9"><path d="M1 7.500h7" stroke="#777" strokeWidth="2" /></svg></MdiBtn>
          <MdiBtn><svg width="10" height="10"><path d="M.5 3.500h6v5h-6zM3 3V1h6v5H7" fill="none" stroke="#777" /></svg></MdiBtn>
          <MdiBtn><svg width="9" height="9"><path d="M1 1l7 7M8 1L1 8" stroke="#777" strokeWidth="2" /></svg></MdiBtn>
        </MdiGroup>
      </MenuBar>
      <Toolbar $h={31}>
        <Grip />
        <Slot $w={26}><NewChart /></Slot>
        <Caret $w={15} />
        <Slot $w={26}><Profiles /></Slot>
        <Caret $w={11} />
        <Slot $w={35}><Market /></Slot>
        <Sep $r={1} />
        <Slot $w={37}><Book /></Slot>
        <Slot $w={100} $on><Robot play />AutoTrading</Slot>
        <Slot $w={104}><OrderIco />Nouvel ordre</Slot>
        <Sep $l={4} />
        <Slot $w={36}><BarsIco /></Slot>
        <Slot $w={30} $on><CandleIco /></Slot>
        <Slot $w={34}><LineIco /></Slot>
        <Sep />
        <Slot $w={36}><Magnify plus /></Slot>
        <Slot $w={32}><Magnify /></Slot>
        <Slot $w={34}><Tile /></Slot>
        <Sep $r={3} />
        <Slot $w={30} $on><ShiftIco /></Slot>
        <Slot $w={30} $on $l={2}><ScrollIco /></Slot>
        <RightIcons><SearchBlue /><ChatIco /></RightIcons>
      </Toolbar>
      <Toolbar $h={30}>
        <Grip />
        <TfGroup>
          {["M1","M5","M15","M30","H1","H4","D1","W1","MN"].map(m => <Tf key={m} $on={m === "M5"}>{m}</Tf>)}
        </TfGroup>
        <BandEnd />
        <Grip />
        <Slot $w={30} $on><CursorIco /></Slot>
        <Slot $w={33}><CrossIco /></Slot>
        <Sep $l={3} $r={2} />
        <Slot $w={32}><VertIco /></Slot>
        <Slot $w={32}><HorizIco /></Slot>
        <Slot $w={32}><TrendIco /></Slot>
        <Slot $w={34}><ChannelIco /></Slot>
        <Slot $w={26}><FiboIco /></Slot>
        <Slot $w={40}><TextIco /></Slot>
        <Slot $w={20}><ShapesIco /></Slot>
        <Caret $w={19} />
        <BandEnd />
      </Toolbar>
      <Rule />
      <Main>
        <Navigator>
          <NavHead><NavTitle>Navigateur</NavTitle><NavClose>×</NavClose></NavHead>
          <Tree>
            {rows.map((r, i) => (
              <Row key={i}>
                {r.cells.map((l, j) => {
                  const last = j === r.cells.length - 1;
                  return (
                    <Cell key={j} $line={l} $elbow={last && r.elbow}>
                      {last && r.exp && <Expander $plus={r.exp === "+"} />}
                    </Cell>
                  );
                })}
                <RowIcon>{r.icon}</RowIcon>
                <RowLabel $sel={r.sel}>{r.t}</RowLabel>
              </Row>
            ))}
          </Tree>
          <NavTabs><NavTabOn>Général</NavTabOn><NavTabOff>Favoris</NavTabOff></NavTabs>
        </Navigator>
        <ChartCol>
          <Chart />
          <ChartTabs>
            <ChartTab $w={84} $on>.DE30LX,M5</ChartTab>
            {chartTabs.map(([t, w]) => <ChartTab key={t} $w={w}>{t}</ChartTab>)}
            <ClipTab $w={64}>.JAPANLX,</ClipTab>
            <TabArrows><ArrowDim>◂</ArrowDim><span>▸</span></TabArrows>
          </ChartTabs>
        </ChartCol>
      </Main>
      <Bottom>
        <Strip><StripX>×</StripX><StripText>Boîte à outils</StripText></Strip>
        <Terminal>
          <Head>
            <HeadCell>Symbole<SortMark>/</SortMark></HeadCell>
            {heads.map(([t, right], i) => <HeadCell key={i} $right={right}>{t}</HeadCell>)}
          </Head>
          <Balance><Dot />{"Solde: 1 848.91 EUR  Action: 1 848.91  Marge libre: 1 848.91"}<BalanceEnd>0.00</BalanceEnd></Balance>
          <Blank />
          <TermTabs>
            <TermOn>Trade</TermOn>
            {termTabs.map(([t, w, b]) => <TermOff key={t} $w={w}>{t}{b && <Badge>{b}</Badge>}</TermOff>)}
            <Tester>Testeur de Stratégie</Tester>
          </TermTabs>
        </Terminal>
      </Bottom>
      <StatusRule />
      <Status>
        <StatusCell $w={1228}>Pour l'Aide, appuyer sur F1</StatusCell>
        <StatusCell $w={129}>Default</StatusCell>
        {statusCells.map((w, i) => <StatusCell key={i} $w={w} />)}
        <StatusCell $w={118} $last><Signal />104.44 ms</StatusCell>
      </Status>
      <Tip>{"550058: Labrousse Fabien  (JFD Brokers Ltd., 1849 EUR, 1:200, Hedge)"}</Tip>
    </Page>
  );
}
